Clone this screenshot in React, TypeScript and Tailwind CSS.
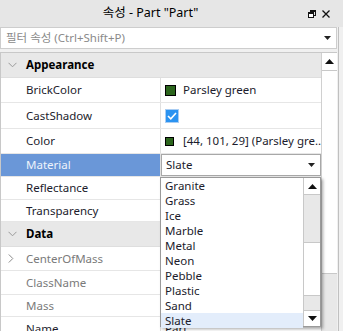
const font = "font-['Noto_Sans','Noto_Sans_CJK_KR',sans-serif]"

const materials = ["Granite", "Grass", "Ice", "Marble", "Metal", "Neon", "Pebble", "Plastic", "Sand", "Slate"]

function Tri({ up = false }: { up?: boolean }) {
  return (
    <svg width="9" height="5" viewBox="0 0 9 5">
      <polygon points={up ? "0,5 9,5 4.5,0" : "0,0 9,0 4.5,5"} fill="#111" />
    </svg>
  )
}

function SmallTri() {
  return (
    <svg width="7" height="4" viewBox="0 0 7 4">
      <polygon points="0,0 7,0 3.5,4" fill="#222" />
    </svg>
  )
}

function ChevronDown() {
  return (
    <svg width="9" height="6" viewBox="0 0 9 6">
      <polyline points="0.5,0.8 4.5,4.8 8.5,0.8" fill="none" stroke="#9a9a9a" strokeWidth="1" />
    </svg>
  )
}

function ChevronRight() {
  return (
    <svg width="6" height="9" viewBox="0 0 6 9">
      <polyline points="0.8,0.5 4.8,4.5 0.8,8.5" fill="none" stroke="#8a8a8a" strokeWidth="1" />
    </svg>
  )
}

function Header({ label, h }: { label: string; h: string }) {
  return (
    <div className={`flex items-center ${h} bg-[#e8e8e8] border-b border-[#dedede]`}>
      <div className="w-[25px] flex justify-center pl-[1px] pr-[4px]">
        <ChevronDown />
      </div>
      <span className="text-[11.5px] font-bold text-black">{label}</span>
    </div>
  )
}

function Row({
  name,
  h,
  children,
  selected = false,
  dim = false,
  expand = false,
}: {
  name: string
  h: string
  children?: React.ReactNode
  selected?: boolean
  dim?: boolean
  expand?: boolean
}) {
  return (
    <div className={`flex ${h} border-b border-[#e6e6e6]`}>
      <div
        className={`w-[160px] shrink-0 flex items-center border-r border-[#e0e0e0] ${
          selected ? "bg-[#6a97d8] text-[#eef3fb]" : dim ? "text-[#7a7a7a]" : "text-[#1c1c2c]"
        }`}
      >
        <div className="w-[25px] flex justify-center pr-[6px]">{expand && <ChevronRight />}</div>
        <span className="text-[11.5px]">{name}</span>
      </div>
      <div className="flex-1 flex items-center text-[11.5px] text-[#1c1c2c]">{children}</div>
    </div>
  )
}

export default function App() {
  return (
    <div className={`w-[343px] h-[331px] overflow-hidden bg-[#f0f0f0] ${font}`}>
      {/* Title bar */}
      <div className="flex items-center h-[27px] bg-[#e6e6e6]">
        <div className="w-[301px] text-center text-[12.5px] text-black leading-none">속성 - Part "Part"</div>
        <div className="flex items-center gap-[6px] pl-[7px]">
          <svg width="8" height="8" viewBox="0 0 8 8">
            <rect x="2.5" y="0.5" width="5" height="5" fill="none" stroke="#111" />
            <rect x="2" y="0" width="6" height="2" fill="#111" />
            <rect x="0.5" y="2.5" width="5" height="5" fill="#fff" stroke="#111" />
            <rect x="0" y="2" width="6" height="2" fill="#111" />
          </svg>
          <svg width="8" height="8" viewBox="0 0 8 8">
            <path d="M0.5 0.5 L7.5 7.5 M7.5 0.5 L0.5 7.5" stroke="#111" strokeWidth="1.3" />
          </svg>
        </div>
      </div>

      <div className="flex h-[304px]">
        <div className="w-[337px] shrink-0">
          {/* Filter */}
          <div className="flex items-center h-[22px] bg-white border border-[#cdcdcd] pl-[5px] pr-[5px]">
            <span className="flex-1 text-[11.5px] text-[#8a8a8a]">필터 속성 (Ctrl+Shift+P)</span>
            <SmallTri />
          </div>
          <div className="h-[3px]" />

          {/* Grid */}
          <div className="relative flex border-t border-l border-[#c8c8c8] bg-white h-[279px]">
            <div className="w-[320px] shrink-0">
              <Header label="Appearance" h="h-[25px]" />
              <Row name="BrickColor" h="h-[25px]">
                <div className="ml-[4px] w-[11px] h-[11px] bg-[#2c651d] border border-black" />
                <span className="ml-[7px]">Parsley green</span>
              </Row>
              <Row name="CastShadow" h="h-[26px]">
                <div className="ml-[4px] w-[14px] h-[14px] bg-[#2b93f1] border border-[#a9cdf3] flex items-center justify-center">
                  <svg width="10" height="8" viewBox="0 0 10 8">
                    <polyline points="1,4 3.8,6.8 9,1" fill="none" stroke="#fff" strokeWidth="1.6" />
                  </svg>
                </div>
              </Row>
              <Row name="Color" h="h-[25px]">
                <div className="ml-[4px] w-[9px] h-[9px] bg-[#2c651d] border border-black" />
                <span className="ml-[9px] whitespace-nowrap">[44, 101, 29] (Parsley gre...</span>
              </Row>
              <Row name="Material" h="h-[23px]" selected>
                <div className="flex items-center h-full w-[160px] bg-white border border-[#a8a8a8] pl-[4px] pr-[5px]">
                  <span className="flex-1">Slate</span>
                  <SmallTri />
                </div>
              </Row>
              <Row name="Reflectance" h="h-[23px]" />
              <Row name="Transparency" h="h-[22px]" />
              <Header label="Data" h="h-[25px]" />
              <Row name="CenterOfMass" h="h-[24px]" dim expand />
              <Row name="ClassName" h="h-[24px]" dim />
              <Row name="Mass" h="h-[22px]" dim />
              <Row name="Name" h="h-[24px]">
                <span className="ml-[4px]">Part</span>
              </Row>
            </div>

            {/* Main scrollbar */}
            <div className="w-[17px] flex flex-col border-l border-[#d0d0d0]">
              <div className="h-[18px] flex items-center justify-center border-b border-[#c8c8c8] bg-white">
                <Tri up />
              </div>
              <div className="h-[202px] bg-white" />
              <div className="flex-1 bg-[#e8e8e8] border-t border-[#c8c8c8]" />
            </div>

            {/* Dropdown list */}
            <div className="absolute left-[159px] top-[124px] w-[161px] h-[150px] flex bg-white border border-[#9a9a9a] shadow-[2px_2px_3px_rgba(0,0,0,0.35)]">
              <div className="flex-1 flex flex-col">
                {materials.map((m) => (
                  <div
                    key={m}
                    className={`h-[15px] flex items-center pl-[4px] text-[11.5px] text-[#1c1c2c] ${
                      m === "Slate" ? "bg-[#e3edfb]" : ""
                    }`}
                  >
                    {m}
                  </div>
                ))}
              </div>
              <div className="w-[17px] flex flex-col border-l border-[#c8c8c8]">
                <div className="h-[17px] flex items-center justify-center border-b border-[#c8c8c8]">
                  <Tri up />
                </div>
                <div className="h-[48px] bg-[#e8e8e8] border-b border-[#c8c8c8]" />
                <div className="h-[53px] bg-white border-b border-[#c8c8c8]" />
                <div className="flex-1 bg-[#e8e8e8] border-b border-[#c8c8c8]" />
                <div className="h-[15px] flex items-center justify-center">
                  <Tri />
                </div>
              </div>
            </div>
          </div>
        </div>
        <div className="w-px" />
        <div className="w-px h-full bg-[#c0c0c0]" />
      </div>
    </div>
  )
}
